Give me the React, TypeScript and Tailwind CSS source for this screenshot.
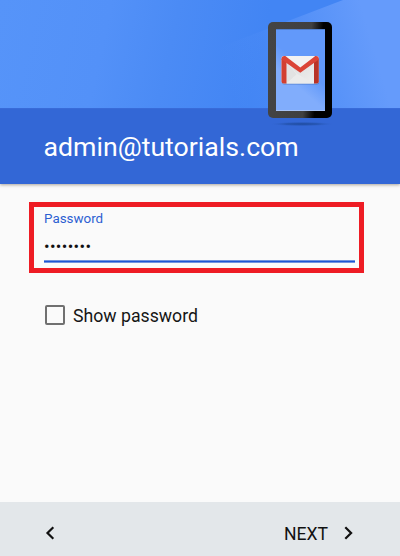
function HeaderArt() {
  return (
    <svg className="block h-full w-full" viewBox="0 0 400 108" preserveAspectRatio="none">
      <defs>
        <linearGradient id="sky" x1="0" y1="0" x2="1" y2="0.06">
          <stop offset="0" stopColor="#5694f9" />
          <stop offset="0.28" stopColor="#5391f8" />
          <stop offset="0.45" stopColor="#4b8bf5" />
          <stop offset="0.68" stopColor="#4285f4" />
          <stop offset="1" stopColor="#4285f4" />
        </linearGradient>
        <linearGradient id="beam" gradientUnits="userSpaceOnUse" x1="225" y1="70" x2="368" y2="28">
          <stop offset="0" stopColor="#659bfb" stopOpacity="0" />
          <stop offset="0.3" stopColor="#659bfb" stopOpacity="0.12" />
          <stop offset="0.65" stopColor="#659bfb" stopOpacity="0.6" />
          <stop offset="1" stopColor="#659bfb" />
        </linearGradient>
      </defs>
      <path d="M0 0h400v108H0z" fill="url(#sky)" />
      <path d="M343 0 220 47v61h180V0z" fill="url(#beam)" />
    </svg>
  );
}

function GmailPhone() {
  return (
    <svg className="absolute left-[260px] top-[20px]" width="80" height="110" viewBox="260 20 80 110">
      <defs>
        <linearGradient id="frame" x1="0" y1="0.35" x2="1" y2="0.5">
          <stop offset="0" stopColor="#444444" />
          <stop offset="0.62" stopColor="#404040" />
          <stop offset="0.8" stopColor="#000000" />
        </linearGradient>
        <radialGradient id="shadow">
          <stop offset="0" stopColor="#1f4b9f" />
          <stop offset="0.5" stopColor="#2453ae" stopOpacity="0.8" />
          <stop offset="1" stopColor="#3367d6" stopOpacity="0" />
        </radialGradient>
        <linearGradient id="screen" gradientUnits="userSpaceOnUse" x1="292" y1="82" x2="304" y2="68">
          <stop offset="0" stopColor="#81adfc" />
          <stop offset="1" stopColor="#6299fa" />
        </linearGradient>
        <linearGradient id="paper" x1="0" y1="0" x2="1" y2="1">
          <stop offset="0" stopColor="#d0d0d0" />
          <stop offset="1" stopColor="#eeeeee" />
        </linearGradient>
      </defs>
      <ellipse cx="302" cy="124" rx="33" ry="2.4" fill="url(#shadow)" />
      <rect x="268" y="22" width="64" height="96" rx="5" fill="url(#frame)" />
      <rect x="276" y="29" width="49" height="82" fill="url(#screen)" />
      <rect x="276" y="29" width="49" height="1" fill="#4f7fd0" />
      <rect x="276" y="110" width="49" height="1" fill="#a8c3f5" />
      <rect x="282" y="56.5" width="37" height="28" rx="2" fill="#3868b7" opacity=".6" />
      <rect x="281.5" y="56" width="37.3" height="27.6" rx="2" fill="#eeeeee" />
      <path d="M286.5 62l10.5 12.5-10.5 9z" fill="#e2e2e2" />
      <path d="M286.5 83.6 297 74l17 9.6z" fill="#ebebeb" />
      <path d="M286.5 60.5 300.3 72l13.7-10.5v22L297 74z" fill="url(#paper)" opacity=".65" />
      <path d="M285 56h30.5l-15.3 11.5z" fill="#f2f2f2" />
      <path d="M281.5 59v22.5q0 2.1 2 2.1h3V61l-4-3z" fill="#d23f31" />
      <path d="M318.8 59v22.5q0 2.1-2 2.1H314V61l4-3z" fill="#b83328" />
      <path d="M281.5 59q0-3 3-3h.8l15 11.4 15-11.4h.6q2.9 0 2.9 3v.5l-18.5 13.3-18.8-13.3z" fill="#db4437" />
    </svg>
  );
}

function Chevron({ d }: { d: string }) {
  return (
    <svg width="10" height="14" viewBox="0 0 10 14" fill="none" stroke="#111111" strokeWidth="2.2">
      <path d={d} />
    </svg>
  );
}

export default function App() {
  return (
    <div className="flex h-[556px] w-[400px] flex-col overflow-hidden bg-[#fafafa] font-['Roboto',sans-serif]">
      <header className="relative z-10 h-[184px] shrink-0 shadow-[0_1px_3px_rgba(70,60,40,0.45)]">
        <div className="h-[108px]">
          <HeaderArt />
        </div>
        <div className="flex h-[76px] items-center border-t border-[#386bd9] bg-[#3367d6] pl-[43.5px]">
          <h1 className="text-[26.7px] leading-8 font-normal whitespace-nowrap text-white">admin@tutorials.com</h1>
        </div>
        <GmailPhone />
      </header>

      <main className="flex-1 pt-[18px]">
        <div className="ml-[29px] h-[71px] w-[335px] border-[5px] border-[#ee1c24] pr-1 pl-[10px]">
          <div className="h-[53px]">
            <div className="pt-1 text-[13.4px] leading-4 text-[#2c5fd2]">Password</div>
            <div className="pt-[10px] text-[16.5px] leading-5 tracking-[0.35px] text-[#111111]">••••••••</div>
          </div>
          <div className="h-[3px] border-y border-[#7094e0] bg-[#1c55d4]" />
        </div>
        <label className="mt-[31px] ml-[45px] flex h-[22px] items-center gap-2">
          <span className="size-5 rounded-[2px] border-2 border-[#707070]" />
          <span className="pt-px text-[17.7px] leading-[22px] text-[#151515]">Show password</span>
        </label>
      </main>

      <footer className="flex h-[54px] items-center justify-between bg-[#e3e7ea] pt-2 pr-[46px] pl-[45px]">
        <button aria-label="Back">
          <Chevron d="M8.3 1.3 2.5 7l5.8 5.7" />
        </button>
        <button className="flex items-center gap-4 text-[17.6px] leading-[22px] text-[#111111]">
          <span className="pt-px">NEXT</span>
          <Chevron d="M1.3 1.3 7.1 7l-5.8 5.7" />
        </button>
      </footer>
    </div>
  );
}
